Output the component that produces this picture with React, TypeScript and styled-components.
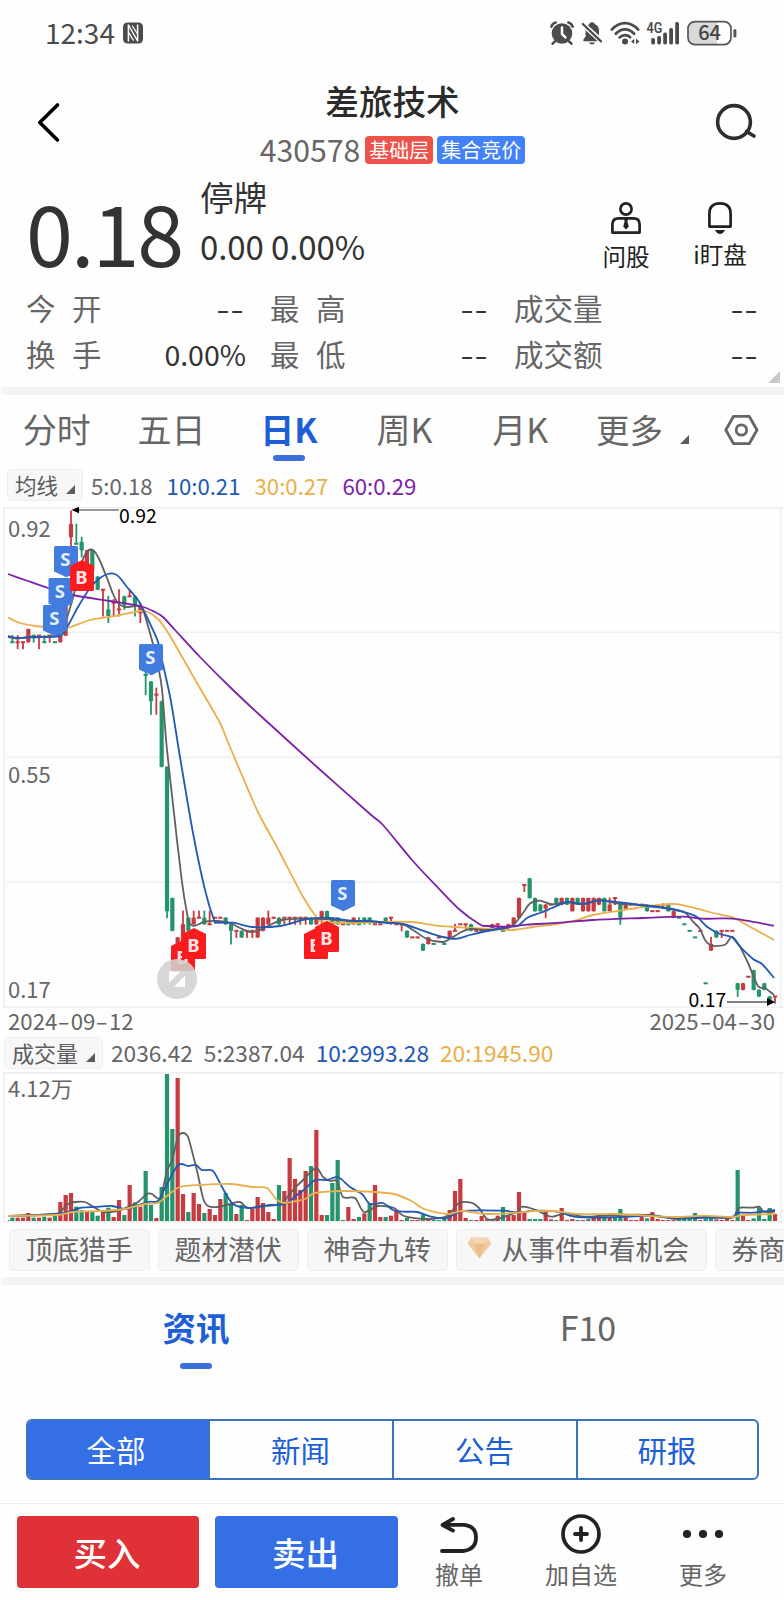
import React from "react";
import styled, { createGlobalStyle } from "styled-components";

const GlobalStyle = createGlobalStyle`
  * { box-sizing: border-box; }
  html, body { margin: 0; padding: 0; background: #fefefe; }
  body { font-family: "Noto Sans CJK SC", "Noto Sans", sans-serif; color: #333; }
  svg { display: block; flex: none; }
`;

const BLUE = "#1f5fd6";
const FILL_BLUE = "#346fe6";
const GREY = "#666";
const ORANGE = "#e8b04c";
const PURPLE = "#7d22a6";
const LINE_BLUE = "#2259b4";
const UP = "#c73a40";
const DOWN = "#24956a";

const Page = styled.main`
  width: 784px;
  height: 1600px;
  overflow: hidden;
  display: flex;
  flex-direction: column;
  background: #fefefe;
`;

const Label = styled.span<{ $size: number; $color?: string; $bold?: boolean; $medium?: boolean; $gap?: number }>`
  flex: none;
  line-height: 1;
  padding-bottom: 0.05em;
  white-space: nowrap;
  font-size: ${(p) => p.$size}px;
  color: ${(p) => p.$color ?? "#333"};
  font-weight: ${(p) => (p.$bold ? 700 : p.$medium ? 500 : 400)};
  letter-spacing: ${(p) => p.$gap ?? 0}px;
`;

const Divider = styled.div`
  flex: none;
  height: 8px;
  margin-left: 1px;
  background: #f4f4f4;
`;

/* ---------- status bar ---------- */

const StatusBar = styled.header`
  flex: none;
  height: 67px;
  display: flex;
  align-items: center;
  padding: 0 47px 2px 45px;
`;

const StatusIcons = styled.div`
  margin-left: auto;
  padding-top: 1px;
  display: flex;
  align-items: center;
  gap: 7px;
`;

const NfcIcon = styled.svg`
  margin-left: 8px;
`;

const AlarmIcon = () => (
  <svg width="24" height="24" viewBox="0 0 24 24">
    <circle cx="12" cy="12.5" r="10.3" fill="#4b4b4b" />
    <path d="M1.4 5.6Q2.6 2.4 5.6 1.6M22.6 5.6Q21.4 2.4 18.4 1.6M5 20.4L2.6 22.6M19 20.4L21.4 22.6" stroke="#4b4b4b" strokeWidth="2.6" strokeLinecap="round" fill="none" />
    <path d="M12 6.5V13L15.4 16.4" stroke="#fff" strokeWidth="2.5" strokeLinecap="round" fill="none" />
  </svg>
);

const BellOffIcon = () => (
  <svg width="22" height="24" viewBox="0 0 22 24">
    <path d="M2.4 20.2V18.6L4.6 15.4V9.2L16.8 20.2ZM8 3.4Q8.6 1.2 11 1.2Q13.4 1.2 14 3.2Q18 5 18 9.6V14.4L6.8 4.2ZM7.8 21.6H14.2Q13 23.6 11 23.6Q9 23.6 7.8 21.6Z" fill="#4b4b4b" />
    <path d="M1.8 3L20 20.4" stroke="#4b4b4b" strokeWidth="2.2" strokeLinecap="round" />
  </svg>
);

const WifiIcon = () => (
  <svg width="30" height="24" viewBox="0 0 30 24">
    <g fill="none" stroke="#4b4b4b" strokeWidth="2.7" strokeLinecap="round">
      <path d="M1.8 8.6Q8 2.2 15 2.2T28.2 8.6" />
      <path d="M5.8 12.8Q10 8.4 15 8.4T24.2 12.8" />
      <path d="M9.6 16.4Q12 14.2 15 14.2T20.2 16.2" />
    </g>
    <circle cx="15" cy="20.4" r="3" fill="#4b4b4b" />
    <path d="M21 20.4L24.2 18V23ZM29.4 20.4L26 17.4V23.2Z" fill="#4b4b4b" />
  </svg>
);

const SignalIcon = () => (
  <svg width="33" height="24" viewBox="0 0 33 24" overflow="visible">
    <text x="-0.4" y="12" fontFamily="Roboto" fontWeight="600" fontSize="14.5" textLength="15.8" lengthAdjust="spacingAndGlyphs" fill="#4b4b4b">4G</text>
    {[17, 15, 11.6, 7, 1].map((top, i) => (
      <rect key={top} x={4.2 + i * 6} y={top} width="3.8" height={23.4 - top} rx="1.6" fill="#4b4b4b" />
    ))}
  </svg>
);

const BatteryIcon = () => (
  <svg width="50" height="26" viewBox="0 0 50 26">
    <path d="M8 2H30V24H8Q2 24 2 18V8Q2 2 8 2Z" fill="#d9d9d9" />
    <rect x="1" y="1.6" width="43" height="23" rx="7" fill="none" stroke="#555" strokeWidth="1.7" />
    <rect x="46.4" y="9" width="3" height="8.6" rx="1.5" fill="#555" />
    <text x="22.6" y="20.4" textAnchor="middle" fontFamily="Noto Sans CJK SC" fontWeight="500" fontSize="20" fill="#444">64</text>
  </svg>
);

/* ---------- title bar ---------- */

const TitleBar = styled.section`
  flex: none;
  height: 109px;
  display: flex;
  justify-content: space-between;
  align-items: flex-start;
  padding: 0 27px 0 36px;
`;

const SideIcon = styled.svg`
  margin-top: 35px;
`;

const TitleStack = styled.div`
  display: flex;
  flex-direction: column;
  align-items: center;
  padding-top: 15px;
  margin-right: -8px;
`;

const TitleRow = styled.div`
  height: 40px;
  display: flex;
  align-items: center;
`;

const CodeRow = styled.div`
  height: 28px;
  margin-top: 14px;
  display: flex;
  align-items: center;
`;

const Tag = styled.span<{ $bg: string; $left: number }>`
  height: 28px;
  margin-left: ${(p) => p.$left}px;
  padding: 0 4px;
  border-radius: 4px;
  display: flex;
  align-items: center;
  background: ${(p) => p.$bg};
`;

/* ---------- quote ---------- */

const Quote = styled.section`
  flex: none;
  height: 106px;
  display: flex;
  padding: 0 17px 0 26px;
`;

const Price = styled.div`
  width: 174px;
  height: 106px;
  padding-top: 6px;
  display: flex;
  align-items: center;
`;

const ChangeStack = styled.div`
  padding-top: 2px;
  display: flex;
  flex-direction: column;
  gap: 9px;
`;

const ChangeRow = styled.div`
  height: 40px;
  display: flex;
  align-items: center;
`;

const QuoteTools = styled.div`
  margin-left: auto;
  display: flex;
`;

const QuoteTool = styled.button<{ $gap: number }>`
  width: 94px;
  padding: 26px 0 0;
  border: 0;
  background: none;
  font-family: inherit;
  display: flex;
  flex-direction: column;
  align-items: center;
  gap: ${(p) => p.$gap}px;
`;

const Stats = styled.section`
  position: relative;
  flex: none;
  height: 105px;
  padding: 3px 0 0 26px;
  display: grid;
  grid-template-columns: 218px 218px 244px;
  grid-auto-rows: 46px;
  column-gap: 26px;
`;

const Stat = styled.div`
  display: flex;
  align-items: center;
  justify-content: space-between;
`;

const StatValue = styled(Label)<{ $nudge: number }>`
  padding-bottom: 0;
  margin-right: ${(p) => p.$nudge}px;
`;

const CornerMark = styled.svg`
  position: absolute;
  right: 4px;
  bottom: 4px;
`;

const Dash = styled.span<{ $width: number; $stretch: number }>`
  display: inline-block;
  width: ${(p) => p.$width}em;
  text-align: center;
  transform: scaleX(${(p) => p.$stretch});
`;

/* ---------- tabs ---------- */

const PeriodTabs = styled.nav`
  flex: none;
  height: 70px;
  display: flex;
  align-items: center;
`;

const PeriodTab = styled.a<{ $shift: number }>`
  position: relative;
  width: 115.6px;
  height: 70px;
  padding-right: ${(p) => p.$shift}px;
  display: flex;
  align-items: center;
  justify-content: center;
`;

const Underline = styled.i<{ $bottom: number }>`
  position: absolute;
  left: 50%;
  bottom: ${(p) => p.$bottom}px;
  width: 32px;
  height: 6px;
  margin-left: -16px;
  border-radius: 3px;
  background: #3a70d8;
`;

const MoreTab = styled.a`
  display: flex;
  align-items: center;
  padding-left: 18px;
  width: 145px;
`;

const Corner = styled.svg<{ $left: number; $top: number }>`
  margin-left: ${(p) => p.$left}px;
  margin-top: ${(p) => p.$top}px;
`;

/* ---------- charts ---------- */

const IndicatorRow = styled.div<{ $height: number; $left: number; $top: number; $gap: number }>`
  flex: none;
  height: ${(p) => p.$height}px;
  padding: ${(p) => p.$top}px 0 0 ${(p) => p.$left}px;
  display: flex;
  align-items: flex-start;
  gap: ${(p) => p.$gap}px;
`;

const IndicatorChip = styled.button<{ $width: number; $after: number }>`
  flex: none;
  width: ${(p) => p.$width}px;
  height: 32px;
  margin: 0 ${(p) => p.$after}px 0 0;
  padding: 0 0 0 7px;
  border: 1px solid #efefef;
  border-radius: 5px;
  background: #f7f7f7;
  font-family: inherit;
  display: flex;
  align-items: center;
`;

const IndicatorValue = styled(Label)`
  height: 32px;
  padding-top: 5px;
`;

const DateRow = styled.div`
  flex: none;
  height: 28px;
  padding: 0 9px 2px 8px;
  display: flex;
  align-items: center;
  justify-content: space-between;
`;

const ChipRow = styled.div`
  flex: none;
  height: 54px;
  padding: 6px 0 0 9px;
  display: flex;
  gap: 8px;
  overflow: hidden;
`;

const StrategyChip = styled.button<{ $width: number }>`
  flex: none;
  width: ${(p) => p.$width}px;
  height: 42px;
  padding: 1px 0 0 15.5px;
  border: 1px solid #eee;
  border-radius: 4px;
  background: #f7f7f7;
  font-family: inherit;
  display: flex;
  align-items: center;
`;

const Gem = styled.svg`
  margin: -6px 10px 0 -6px;
`;

/* ---------- news ---------- */

const InfoTabs = styled.nav`
  flex: none;
  height: 86px;
  display: flex;
`;

const InfoTab = styled.a`
  position: relative;
  flex: 1;
  display: flex;
  align-items: center;
  justify-content: center;
`;

const Segments = styled.div`
  flex: none;
  width: 733px;
  height: 61px;
  margin: 48px 0 0 26px;
  border: 2px solid #3d72bd;
  border-radius: 6px;
  overflow: hidden;
  display: grid;
  grid-template-columns: 180px 184px 184px 1fr;
`;

const Segment = styled.button<{ $active?: boolean }>`
  border: 0;
  border-left: ${(p) => (p.$active ? "0" : "2px solid #3d72bd")};
  background: ${(p) => (p.$active ? FILL_BLUE : "transparent")};
  font-family: inherit;
  padding: 1px ${(p) => (p.$active ? 4 : 1)}px 0 0;
  display: flex;
  align-items: center;
  justify-content: center;
`;

const TradeBar = styled.footer`
  flex: none;
  height: 97px;
  margin-top: auto;
  padding: 12px 0 0 17px;
  border-top: 1px solid #ececec;
  display: flex;
`;

const TradeButton = styled.button<{ $bg: string; $width: number }>`
  flex: none;
  width: ${(p) => p.$width}px;
  height: 72px;
  margin-right: ${(p) => (p.$width === 182 ? 16 : 0)}px;
  padding: 1px 2px 0 0;
  border: 0;
  border-radius: 4px;
  background: ${(p) => p.$bg};
  font-family: inherit;
  display: flex;
  align-items: center;
  justify-content: center;
`;

const TradeTool = styled.button`
  width: 122px;
  padding: 0;
  border: 0;
  background: none;
  font-family: inherit;
  display: flex;
  flex-direction: column;
  align-items: center;
  gap: 8px;
`;

/* ---------- data ---------- */

type Candle = [index: number, open: number, high: number, low: number, close: number, falling?: 1];

/* Prices in hundredths; flat sessions carry an explicit direction flag. */
const candles: Candle[] = [
  [1, 72, 73, 72, 72, 1], [2, 72, 73, 71, 72], [3, 72, 72, 71, 72], [4, 72, 74, 72, 74],
  [5, 73, 73, 72, 73, 1], [6, 73, 73, 71, 73], [7, 72, 73, 72, 72, 1], [8, 73, 73, 72, 73], [9, 72, 72, 72, 72, 1],
  [10, 72, 73, 72, 73], [11, 73, 80, 73, 80], [12, 88, 92, 86, 90], [13, 87, 90, 87, 87, 1], [14, 87.3, 88, 85, 86],
  [15, 82, 86, 82, 86], [16, 86, 86, 82, 83], [17, 82, 82, 80, 80], [18, 80, 80, 76, 80], [19, 77, 79, 75, 76],
  [20, 78, 78.5, 76, 78], [21, 77, 80, 76, 77], [22, 79, 79, 77, 77.6], [23, 79, 80, 79, 79], [24, 79, 79, 76, 77.5],
  [25, 76.4, 78, 75, 77.5], [26, 67, 69, 64, 67, 1], [27, 66, 66, 61, 63], [28, 64, 65, 61, 64], [29, 63, 63, 53, 53],
  [30, 53, 53, 30, 31], [31, 33, 33, 28, 28], [32, 25, 27, 25, 27], [33, 26, 31, 26, 29], [34, 30, 30, 27, 28],
  [35, 29, 31, 29, 30], [36, 30, 31, 30, 30], [37, 30, 31, 29, 29], [38, 29, 31, 29, 29], [39, 30, 30, 30, 30],
  [40, 30, 30, 30, 30], [41, 30, 30, 29, 29], [42, 29, 29, 26, 28], [43, 28, 28, 27, 28], [44, 28, 28, 27, 27],
  [45, 28, 28, 27, 28], [46, 28, 28, 27, 28], [47, 27, 30, 27, 30], [48, 28, 30, 28, 30], [49, 29, 31, 29, 30],
  [50, 30, 30, 30, 30], [51, 30, 30, 29, 29], [52, 30, 30, 29, 30], [53, 30, 30, 29, 30], [54, 30, 30, 29, 30],
  [55, 30, 30, 29, 30], [56, 30, 30, 29, 30], [57, 30, 30, 29, 29], [58, 29, 30, 29, 30], [59, 30, 31, 29, 31],
  [60, 31, 31, 30, 30], [61, 30, 30, 29, 29], [62, 30, 30, 29, 29], [63, 29, 29, 29, 29], [64, 29, 29, 29, 29, 1],
  [65, 29, 30, 29, 30], [66, 29, 30, 29, 29, 1], [67, 30, 30, 29, 29.2], [68, 30, 30, 29, 29.2], [69, 29, 29, 29, 29],
  [70, 29, 29, 29, 29], [71, 30, 30, 29.3, 29.3], [72, 30, 30, 29, 30], [73, 29, 29, 29, 29], [74, 29, 29, 28, 29],
  [75, 28, 28, 27, 27], [76, 27, 27, 27, 27], [77, 27, 27, 27, 27], [78, 26, 26, 25, 25], [79, 26, 27, 26, 27],
  [80, 26, 26, 26, 26, 1], [81, 27, 27, 27, 27], [82, 26, 26, 26, 26, 1], [83, 27, 28, 27, 28], [84, 28, 29, 28, 28],
  [85, 29, 29, 29, 29], [86, 29, 29, 28.4, 29], [87, 29, 29, 28, 28], [88, 28, 28, 28, 28], [89, 28, 28, 28, 28],
  [90, 28, 28, 28, 28], [91, 28, 29, 28, 29], [92, 29, 29, 28.4, 29], [93, 28, 28, 28, 28, 1], [94, 28.4, 29, 28.4, 29],
  [95, 29, 30, 29, 30], [96, 30, 33, 30, 33], [97, 35, 35, 34, 35], [98, 36, 36, 33, 33], [99, 33, 33, 31, 31],
  [100, 32, 32, 31, 31], [101, 31.4, 32, 30, 32], [102, 32, 32, 32, 32], [103, 33, 33, 32, 32], [104, 32, 33, 32, 33],
  [105, 33, 33, 32, 32], [106, 31, 33, 31, 33], [107, 33, 33, 32, 32], [108, 31, 33, 31, 33], [109, 31, 33, 31, 33],
  [110, 31, 33, 31, 33], [111, 32, 33, 32, 33], [112, 33, 33, 31, 31], [113, 31, 33, 31, 32], [114, 33, 33, 32, 33],
  [115, 32, 32, 29, 30], [116, 31.4, 32, 31.4, 32], [117, 32, 32, 32, 32], [118, 32, 32, 32, 32], [119, 32, 32, 32, 32, 1],
  [120, 31.8, 32, 31, 31], [121, 31, 31, 31, 31], [122, 31, 31, 31, 31], [123, 32, 32, 31.4, 32], [124, 32, 32, 31, 31],
  [125, 30, 31, 30, 31], [126, 30, 30, 30, 30, 1], [127, 29, 29, 29, 29, 1], [128, 28, 28, 28, 28, 1], [129, 27, 27, 27, 27, 1],
  [130, 28, 28, 28, 28], [131, 20, 20, 20, 20, 1], [132, 25, 27, 25, 26], [133, 28, 28, 27, 27], [134, 28, 28, 27, 28],
  [135, 28, 28, 28, 28], [136, 28, 28, 28, 28], [137, 20, 20, 18, 19], [138, 19, 20, 19, 20], [139, 21, 21, 21, 21],
  [140, 22, 22, 19, 19], [141, 19, 19, 18, 18], [142, 20, 20, 19, 19], [143, 18, 18, 17.5, 17.5], [144, 18, 18, 17, 18],
];

/* Bar heights in thirds of a pixel, oldest session first. */
const volumes = [
  3, 10, 10, 10, 24, 10, 10, 13, 10, 23, 57, 78, 84, 43, 32, 27, 27, 16, 29, 40, 12, 63, 18, 108, 56, 43, 150, 48, 9, 102,
  441, 276, 429, 81, 27, 84, 51, 24, 36, 18, 66, 84, 53, 21, 48, 3, 36, 72, 54, 27, 6, 108, 90, 189, 126, 93, 150, 165,
  273, 18, 18, 114, 183, 3, 42, 6, 12, 23, 53, 108, 12, 12, 16, 31, 3, 10, 3, 3, 18, 3, 3, 3, 6, 33, 90, 126, 9, 3, 3, 15,
  5, 5, 16, 42, 17, 18, 87, 26, 6, 6, 6, 27, 5, 3, 39, 3, 6, 3, 3, 6, 11, 18, 13, 10, 10, 36, 13, 3, 3, 13, 8, 27, 6, 3,
  3, 3, 8, 8, 10, 24, 3, 7, 10, 5, 3, 7, 3, 153, 15, 3, 8, 43, 6, 39, 21,
];
const fallingVolumes = new Set([
  0, 1, 5, 7, 9, 13, 14, 16, 17, 19, 22, 24, 26, 27, 29, 30, 31, 34, 37, 41, 42, 44, 51, 57, 60, 61, 62, 63, 66, 68, 71, 75,
  78, 80, 81, 82, 87, 91, 93, 98, 99, 100, 103, 107, 109, 112, 114, 115, 120, 126, 127, 128, 129, 131, 132, 137, 140, 141,
  142, 143,
]);

type Series = { color: string; points: number[] };

const priceAverages: Series[] = [
  {
    color: ORANGE,
    points: [8, 617.5, 20, 623, 35, 626, 55, 628, 66, 628, 72, 626.5, 90, 620, 105, 617.5, 120, 615, 140, 611, 148, 612, 158, 619, 165, 628, 173, 641, 197, 683, 220, 723, 230, 747, 257, 810, 277, 847, 302, 895, 317, 918, 323, 922, 347, 923, 370, 922.5, 393, 921.7, 413, 922, 437, 925.7, 470, 928, 493, 929, 513, 930, 533, 927, 557, 924, 577, 920, 593, 915, 620, 910.7, 643, 907, 670, 904, 680, 904.7, 697, 908.7, 713, 913, 733, 917.7, 750, 926.7, 774, 940],
  },
  {
    color: "#606060",
    points: [8, 637, 18, 638.5, 28, 637, 40, 637, 55, 636, 62, 632, 67, 618, 75, 590, 80, 568, 86, 553, 91, 549.5, 95, 552, 100, 561, 107, 578, 113, 594, 118, 603, 125, 607, 138, 606, 143, 610, 148, 626, 155, 652, 161.7, 687, 166.7, 747, 173.3, 807, 181.7, 880, 187.3, 915, 190, 924, 195, 925.7, 205, 921.7, 218, 921, 230, 923, 240, 928, 250, 932, 258, 930.7, 270, 925, 282, 920, 303, 918.7, 327, 919.3, 347, 921, 370, 921.3, 380, 922, 402, 924, 413, 930, 427, 939, 442, 942, 448, 940, 460, 932.7, 470, 929, 487, 930, 507, 928, 515, 923, 523, 913, 530, 903.5, 540, 900.7, 552, 904.3, 567, 902.3, 583, 904.3, 598, 900, 610, 902, 622, 904, 643, 905, 667, 908, 685, 912.7, 693, 921.7, 700, 929, 705, 940, 712, 945.7, 725, 944.7, 732, 936.7, 740, 946.7, 748, 963, 758, 986, 765, 988, 774, 995],
  },
  {
    color: LINE_BLUE,
    points: [8, 636, 18, 638, 40, 637, 57, 636.5, 62, 635, 70, 622, 78, 607, 90, 588, 100, 578, 108, 574, 115, 574, 120, 578, 127, 587, 138, 600, 145, 613, 152, 628, 158, 642, 162, 660, 170.7, 700, 180, 757, 193, 833, 205, 890, 214, 920, 217, 922.7, 233, 922.7, 253, 927, 280, 926, 307, 919, 330, 918, 350, 920.7, 370, 921, 387, 923, 403, 924, 423, 930.7, 443, 937, 457, 938.7, 470, 935, 487, 931, 507, 927, 518, 925.7, 527, 918, 540, 913, 552, 908, 567, 902, 583, 903.7, 600, 900.7, 623, 902.7, 647, 906, 670, 909, 683, 911.7, 697, 917, 707, 926.7, 720, 934, 732, 937.3, 740, 946.7, 753, 959, 762, 964, 774, 978],
  },
  {
    color: PURPLE,
    points: [8, 574, 25, 580, 48, 588, 75, 595.5, 110, 601, 140, 606, 155, 612, 163, 617, 175, 630, 200, 657, 232, 689, 263, 718, 317, 767, 370, 814, 383, 825, 412, 860, 437, 886.7, 460, 910, 480, 924.5, 487, 926, 507, 926.7, 527, 924.7, 560, 922.7, 593, 920, 643, 918, 683, 916.7, 703, 918.7, 733, 918.7, 774, 925.7],
  },
];

const volumeAverages: Series[] = [
  {
    color: "#606060",
    points: [8, 1216, 55, 1214, 62, 1210, 68, 1204, 75, 1202, 85, 1202, 92, 1206, 103, 1212, 117, 1211, 128, 1207, 138, 1202, 147, 1194, 152, 1194, 157, 1198, 161, 1197, 167, 1171, 172, 1160, 178, 1137, 183, 1133, 188, 1137, 193, 1155, 198, 1175, 203, 1198, 208, 1206, 218, 1207, 230, 1204, 240, 1202, 248, 1208, 262, 1206, 275, 1205, 283, 1202, 293, 1190, 303, 1180, 316, 1168, 323, 1177, 330, 1181, 337, 1181, 343, 1197, 355, 1198, 364, 1212, 378, 1206, 394, 1208, 404, 1216, 427, 1219, 447, 1216, 459, 1203, 471, 1202.7, 479, 1208, 487, 1219, 497, 1219, 517, 1211.7, 522, 1206.7, 536, 1210, 551, 1216.7, 567, 1213, 584, 1216.7, 617, 1215, 651, 1215, 677, 1219, 704, 1217, 727, 1218, 734, 1216.7, 739, 1208, 752, 1207.7, 759, 1206.7, 764, 1211.7, 775, 1211.7],
  },
  {
    color: LINE_BLUE,
    points: [8, 1216, 40, 1215, 65, 1213, 80, 1208, 95, 1207, 112, 1206, 127, 1209, 147, 1202, 158, 1201, 165, 1188, 178, 1165, 188, 1166, 196, 1165, 202, 1170, 213, 1171, 222, 1187, 233, 1204, 250, 1208, 270, 1205, 285, 1204, 297, 1195, 305, 1189, 315, 1180, 327, 1180, 338, 1177, 350, 1187, 362, 1194, 370, 1204, 383, 1203, 393, 1210, 404, 1211.7, 417, 1212, 431, 1216.7, 446, 1218, 464, 1211, 504, 1210.7, 517, 1212.7, 534, 1210.7, 557, 1211.7, 574, 1216.7, 597, 1217.7, 627, 1216.7, 651, 1215.7, 674, 1218, 731, 1217, 737, 1212.7, 754, 1212.7, 775, 1210],
  },
  {
    color: ORANGE,
    points: [8, 1216, 55, 1215, 73, 1212, 100, 1211, 125, 1209, 145, 1204, 158, 1203, 168, 1195, 180, 1187, 200, 1185, 230, 1184, 253, 1187, 267, 1188, 277, 1200, 285, 1203, 305, 1199, 315, 1193, 345, 1191, 375, 1192, 394, 1194, 411, 1200.7, 424, 1209, 447, 1214, 462, 1211, 487, 1214, 517, 1212.7, 534, 1211, 554, 1211, 577, 1214, 617, 1214, 651, 1216, 677, 1217, 704, 1215.7, 731, 1217, 744, 1215, 775, 1214],
  },
];

const PRICE_TOP = 507;
const VOLUME_TOP = 1072;
const slotX = (i: number) => 7 + (i * 16) / 3;
const priceY = (p: number) => 511 + (92 - p) * 6.56 - PRICE_TOP;

/* Catmull-Rom curve through a flat list of x, y pairs. */
function smoothPath(flat: number[], top: number) {
  const pts: [number, number][] = [];
  for (let i = 0; i < flat.length; i += 2) pts.push([flat[i], flat[i + 1] - top]);
  let d = `M${pts[0][0]} ${pts[0][1]}`;
  for (let i = 0; i < pts.length - 1; i++) {
    const a = pts[Math.max(0, i - 1)];
    const b = pts[i];
    const c = pts[i + 1];
    const e = pts[Math.min(pts.length - 1, i + 2)];
    const f = (n: number) => n.toFixed(1);
    d += `C${f(b[0] + (c[0] - a[0]) / 7)} ${f(b[1] + (c[1] - a[1]) / 7)} ${f(c[0] - (e[0] - b[0]) / 7)} ${f(c[1] - (e[1] - b[1]) / 7)} ${f(c[0])} ${f(c[1])}`;
  }
  return d;
}

const Averages = ({ series, top }: { series: Series[]; top: number }) => (
  <g fill="none" strokeWidth="1.8" strokeLinejoin="round">
    {series.map((s) => (
      <path key={s.color} d={smoothPath(s.points, top)} stroke={s.color} />
    ))}
  </g>
);

const Marker = ({ kind, x, y }: { kind: "S" | "B"; x: number; y: number }) => (
  <g transform={`translate(${x} ${y - PRICE_TOP})`}>
    {kind === "S" ? (
      <path d="M1.5 0H22.5Q24 0 24 1.5V25.5L12.5 31.3L0 25.5V1.5Q0 0 1.5 0Z" fill="#417cde" />
    ) : (
      <path d="M12 0L24 6V29.5Q24 31 22.5 31H1.5Q0 31 0 29.5V6Z" fill="#fa1b1e" />
    )}
    <text x="11.3" y={kind === "S" ? 20 : 23.6} textAnchor="middle" fontFamily="Noto Sans" fontWeight="700" fontSize="18.5" fill={kind === "S" ? "#e6efff" : "#ffe4e4"}>
      {kind}
    </text>
  </g>
);

const AxisText = ({ x, y, children, dark }: { x: number; y: number; children: string; dark?: boolean }) => (
  <text x={x} y={y} fontFamily="Noto Sans CJK SC" fontSize={dark ? 19.4 : 22} fill={dark ? "#000" : GREY}>
    {children}
  </text>
);

const PriceChart = () => (
  <svg width="784" height="501" viewBox="0 0 784 501">
    <path d="M3 0.7H784M6 125.3H781M6 250.3H781M6 375.3H781M3 500.2H784M4 0V501M780.8 0V501" stroke="#efefef" strokeWidth="1.6" fill="none" />
    {candles.map(([i, open, high, low, close, falling]) => {
      const x = slotX(i);
      const color = falling || close < open ? DOWN : UP;
      const flat = open === close;
      const top = priceY(Math.max(open, close)) - (flat ? 1 : 0);
      const height = flat ? 2 : Math.abs(priceY(open) - priceY(close));
      return (
        <g key={i} fill={color}>
          <rect x={x - 0.9} y={priceY(high) - 0.5} width="1.8" height={priceY(low) - priceY(high) + 1} />
          <rect x={x - 2.1} y={top} width="4.2" height={height} />
        </g>
      );
    })}
    <Averages series={priceAverages} top={PRICE_TOP} />
    <AxisText x={8} y={29.6}>0.92</AxisText>
    <AxisText x={8} y={276}>0.55</AxisText>
    <AxisText x={8} y={491}>0.17</AxisText>
    <path d="M76 3H119" stroke="#777" strokeWidth="1.6" />
    <path d="M71.5 3L79 -0.2V6.2Z" fill="#000" />
    <AxisText x={119} y={16} dark>0.92</AxisText>
    <path d="M727 495H768" stroke="#555" strokeWidth="1.6" />
    <path d="M775 495L767 491V499Z" fill="#000" />
    <AxisText x={688.5} y={500} dark>0.17</AxisText>
    <Marker kind="S" x={54} y={546} />
    <Marker kind="S" x={48.5} y={578} />
    <Marker kind="S" x={43} y={605} />
    <Marker kind="B" x={70} y={560} />
    <Marker kind="S" x={139} y={644} />
    <Marker kind="B" x={171} y={940} />
    <Marker kind="B" x={182} y={928} />
    <Marker kind="B" x={304} y={928} />
    <Marker kind="B" x={315} y={921} />
    <Marker kind="S" x={331} y={880} />
    <circle cx="177" cy="472" r="20" fill="#d2d2d2" fillOpacity="0.88" />
    <path d="M169 464.5H180.5L169 475.5ZM185 468.5V480H174Z" fill="#fff" />
  </svg>
);

const VolumeChart = () => (
  <svg width="784" height="151" viewBox="0 0 784 151">
    <path d="M3 0.9H784M3 149.8H784M4 0V150M780.8 0V150" stroke="#efefef" strokeWidth="1.7" fill="none" />
    {volumes.map((v, i) => (
      <rect key={i} x={Math.max(8, slotX(i) - 2.1)} y={149 - v / 3} width={i === 0 ? 1.5 : 4.2} height={v / 3} fill={fallingVolumes.has(i) ? DOWN : UP} />
    ))}
    <Averages series={volumeAverages} top={VOLUME_TOP} />
    <AxisText x={8} y={25}>4.12万</AxisText>
  </svg>
);

const DateLabel = ({ value }: { value: string }) => (
  <Label $size={22.2} $color={GREY}>
    {value.split("-").map((part, i) => (
      <React.Fragment key={i}>
        {i > 0 && <Dash $width={0.61} $stretch={1.6}>-</Dash>}
        {part}
      </React.Fragment>
    ))}
  </Label>
);

const stats: [string, string][] = [
  ["今开", "--"],
  ["最高", "--"],
  ["成交量", "--"],
  ["换手", "0.00%"],
  ["最低", "--"],
  ["成交额", "--"],
];

const Triangle = ({ left, top }: { left: number; top: number }) => (
  <Corner $left={left} $top={top} width="9" height="9" viewBox="0 0 9 9">
    <path d="M9 0V9H0Z" fill="#5c5c5c" />
  </Corner>
);

export default function App() {
  return (
    <Page>
      <GlobalStyle />
      <StatusBar>
        <Label $size={28} $color="#4b4b4b">12:34</Label>
        <NfcIcon width="20" height="22" viewBox="0 0 20 22">
          <rect x="0" y="0.5" width="20" height="21" rx="4.5" fill="#4b4b4b" />
          <path d="M5.4 19.5V3L14.6 19V2.5" stroke="#fff" strokeWidth="1.5" strokeLinejoin="round" fill="none" />
          <path d="M9 3.5L14.4 11.6M5.6 10.4L10.6 18.6" stroke="#fff" strokeWidth="1.2" fill="none" />
        </NfcIcon>
        <StatusIcons>
          <AlarmIcon />
          <BellOffIcon />
          <WifiIcon />
          <SignalIcon />
          <BatteryIcon />
        </StatusIcons>
      </StatusBar>

      <TitleBar>
        <SideIcon width="26" height="42" viewBox="0 0 26 42">
          <path d="M21.5 3L3.8 20.5L21.5 38" stroke="#000" strokeWidth="3.6" strokeLinecap="round" strokeLinejoin="round" fill="none" />
        </SideIcon>
        <TitleStack>
          <TitleRow>
            <Label $size={33.6} $color="#2b2b2b" $medium>差旅技术</Label>
          </TitleRow>
          <CodeRow>
            <Label $size={30.2} $color={GREY}>430578</Label>
            <Tag $bg="#ef524a" $left={5}>
              <Label $size={20} $color="#fff">基础层</Label>
            </Tag>
            <Tag $bg="#4381f8" $left={4}>
              <Label $size={20} $color="#fff">集合竞价</Label>
            </Tag>
          </CodeRow>
        </TitleStack>
        <SideIcon width="42" height="40" viewBox="0 0 42 40">
          <circle cx="19" cy="20" r="16.4" stroke="#2e2e2e" strokeWidth="3.6" fill="none" />
          <path d="M31.5 29.5L39 34" stroke="#2e2e2e" strokeWidth="3.6" strokeLinecap="round" />
        </SideIcon>
      </TitleBar>

      <Quote>
        <Price>
          <Label $size={84.5} $gap={-2}>0.18</Label>
        </Price>
        <ChangeStack>
          <ChangeRow>
            <Label $size={33.6}>停牌</Label>
          </ChangeRow>
          <ChangeRow>
            <Label $size={33} $gap={-0.1}>0.00 0.00%</Label>
          </ChangeRow>
        </ChangeStack>
        <QuoteTools>
          <QuoteTool $gap={11}>
            <svg width="30" height="32" viewBox="0 0 30 32">
              <circle cx="15" cy="7" r="5.6" stroke="#222" strokeWidth="2.7" fill="none" />
              <path d="M7.5 16.4H22.5Q28.6 16.4 28.6 22.5V30.6H1.4V22.5Q1.4 16.4 7.5 16.4Z" stroke="#222" strokeWidth="2.7" strokeLinejoin="round" fill="none" />
              <path d="M13 17H17L16.4 19.5L17.8 24.5L15 27.5L12.2 24.5L13.6 19.5Z" fill="#222" />
            </svg>
            <Label $size={23.6} $color="#222">问股</Label>
          </QuoteTool>
          <QuoteTool $gap={9}>
            <svg width="26" height="32" viewBox="0 0 26 32">
              <path d="M2.4 24.6V11.8Q2.4 1.4 13 1.4T23.6 11.8V24.6Z" stroke="#222" strokeWidth="2.7" strokeLinejoin="round" fill="none" />
              <path d="M8 28H18Q16 32 13 32T8 28Z" fill="#222" />
            </svg>
            <Label $size={23.6} $color="#222">i盯盘</Label>
          </QuoteTool>
        </QuoteTools>
      </Quote>

      <Stats>
        {stats.map(([name, value]) => (
          <Stat key={name}>
            <Label $size={29.5} $color={GREY} $gap={name.length === 2 ? 16.4 : 0}>{name}</Label>
            {value === "--" ? (
              <StatValue $size={28} $nudge={0}>
                <Dash $width={0.5} $stretch={1.35}>-</Dash>
                <Dash $width={0.5} $stretch={1.35}>-</Dash>
              </StatValue>
            ) : (
              <StatValue $size={28.5} $nudge={-2}>{value}</StatValue>
            )}
          </Stat>
        ))}
        <CornerMark width="12" height="12" viewBox="0 0 12 12">
          <path d="M12 0V12H0Z" fill="#c9c9c9" />
        </CornerMark>
      </Stats>

      <Divider />

      <PeriodTabs>
        {["分时", "五日", "日K", "周K", "月K"].map((name) => (
          <PeriodTab key={name} $shift={name === "五日" ? 4 : name === "分时" ? 2 : 0}>
            <Label $size={34} $color={name === "日K" ? BLUE : GREY} $bold={name === "日K"}>{name}</Label>
            {name === "日K" && <Underline $bottom={4} />}
          </PeriodTab>
        ))}
        <MoreTab>
          <Label $size={33.5} $color={GREY}>更多</Label>
          <Triangle left={17} top={20} />
        </MoreTab>
        <svg width="36" height="32" viewBox="0 0 36 32">
          <path d="M10.6 2.3H26.2L34 16L26.2 29.7H10.6L2.8 16Z" stroke={GREY} strokeWidth="2.8" strokeLinejoin="round" fill="none" />
          <circle cx="18.4" cy="16" r="5.2" stroke={GREY} strokeWidth="2.8" fill="none" />
        </svg>
      </PeriodTabs>

      <IndicatorRow $height={42} $left={7} $top={4} $gap={14}>
        <IndicatorChip $width={76} $after={-6}>
          <Label $size={21.5} $color="#5c5c5c">均线</Label>
          <Triangle left={8} top={8} />
        </IndicatorChip>
        <IndicatorValue $size={22.2} $color={GREY}>5:0.18</IndicatorValue>
        <IndicatorValue $size={22.2} $color={LINE_BLUE}>10:0.21</IndicatorValue>
        <IndicatorValue $size={22.2} $color={ORANGE}>30:0.27</IndicatorValue>
        <IndicatorValue $size={22.2} $color={PURPLE}>60:0.29</IndicatorValue>
      </IndicatorRow>

      <PriceChart />

      <DateRow>
        <DateLabel value="2024-09-12" />
        <DateLabel value="2025-04-30" />
      </DateRow>

      <IndicatorRow $height={36} $left={4} $top={1} $gap={11}>
        <IndicatorChip $width={99} $after={-3}>
          <Label $size={22} $color="#5c5c5c">成交量</Label>
          <Triangle left={8} top={8} />
        </IndicatorChip>
        <IndicatorValue $size={22.7} $color={GREY}>2036.42</IndicatorValue>
        <IndicatorValue $size={22.7} $color={GREY}>5:2387.04</IndicatorValue>
        <IndicatorValue $size={22.7} $color={LINE_BLUE}>10:2993.28</IndicatorValue>
        <IndicatorValue $size={22.7} $color={ORANGE}>20:1945.90</IndicatorValue>
      </IndicatorRow>

      <VolumeChart />

      <ChipRow>
        <StrategyChip $width={141}>
          <Label $size={26.8} $color={GREY}>顶底猎手</Label>
        </StrategyChip>
        <StrategyChip $width={141}>
          <Label $size={26.8} $color={GREY}>题材潜伏</Label>
        </StrategyChip>
        <StrategyChip $width={141}>
          <Label $size={26.8} $color={GREY}>神奇九转</Label>
        </StrategyChip>
        <StrategyChip $width={251}>
          <Gem width="25" height="22" viewBox="0 0 25 22">
            <path d="M4.5 0.5H20.5L24.5 6.5L12.5 21.5L0.5 6.5Z" fill="#f0cba0" />
            <path d="M4.5 0.5H20.5L18 6.5H7Z" fill="#f4d7b4" />
            <path d="M7 6.5H18L12.5 21.5Z" fill="#ecbd8c" />
          </Gem>
          <Label $size={26.8} $color={GREY}>从事件中看机会</Label>
        </StrategyChip>
        <StrategyChip $width={141}>
          <Label $size={26.8} $color={GREY}>券商</Label>
        </StrategyChip>
      </ChipRow>

      <Divider />

      <InfoTabs>
        <InfoTab>
          <Label $size={33.5} $color={BLUE} $bold>资讯</Label>
          <Underline $bottom={2} />
        </InfoTab>
        <InfoTab>
          <Label $size={34} $color={GREY}>F10</Label>
        </InfoTab>
      </InfoTabs>

      <Segments>
        <Segment $active>
          <Label $size={29.5} $color="#fff">全部</Label>
        </Segment>
        {["新闻", "公告", "研报"].map((name) => (
          <Segment key={name}>
            <Label $size={29.5} $color={BLUE}>{name}</Label>
          </Segment>
        ))}
      </Segments>

      <TradeBar>
        <TradeButton $bg="#df3137" $width={182}>
          <Label $size={33.5} $color="#fff" $medium>买入</Label>
        </TradeButton>
        <TradeButton $bg={FILL_BLUE} $width={183}>
          <Label $size={33.5} $color="#fff" $medium>卖出</Label>
        </TradeButton>
        <TradeTool>
          <svg width="40" height="38" viewBox="0 0 40 38">
            <path d="M14 3L3.5 9L14 14.6M4 8.8H24Q37 9.5 37 21.5T24 35H3" stroke="#222" strokeWidth="3.8" strokeLinecap="round" strokeLinejoin="round" fill="none" />
          </svg>
          <Label $size={24} $color={GREY}>撤单</Label>
        </TradeTool>
        <TradeTool>
          <svg width="42" height="38" viewBox="0 0 42 38" overflow="visible">
            <circle cx="21" cy="18" r="18" stroke="#222" strokeWidth="3.7" fill="none" />
            <path d="M15 18H27M21 12V24" stroke="#222" strokeWidth="3.8" strokeLinecap="round" />
          </svg>
          <Label $size={24} $color={GREY}>加自选</Label>
        </TradeTool>
        <TradeTool>
          <svg width="42" height="38" viewBox="0 0 42 38">
            <g fill="#222">
              <circle cx="5" cy="18" r="4.1" />
              <circle cx="21" cy="18" r="4.1" />
              <circle cx="37" cy="18" r="4.1" />
            </g>
          </svg>
          <Label $size={24} $color={GREY}>更多</Label>
        </TradeTool>
      </TradeBar>
    </Page>
  );
}
